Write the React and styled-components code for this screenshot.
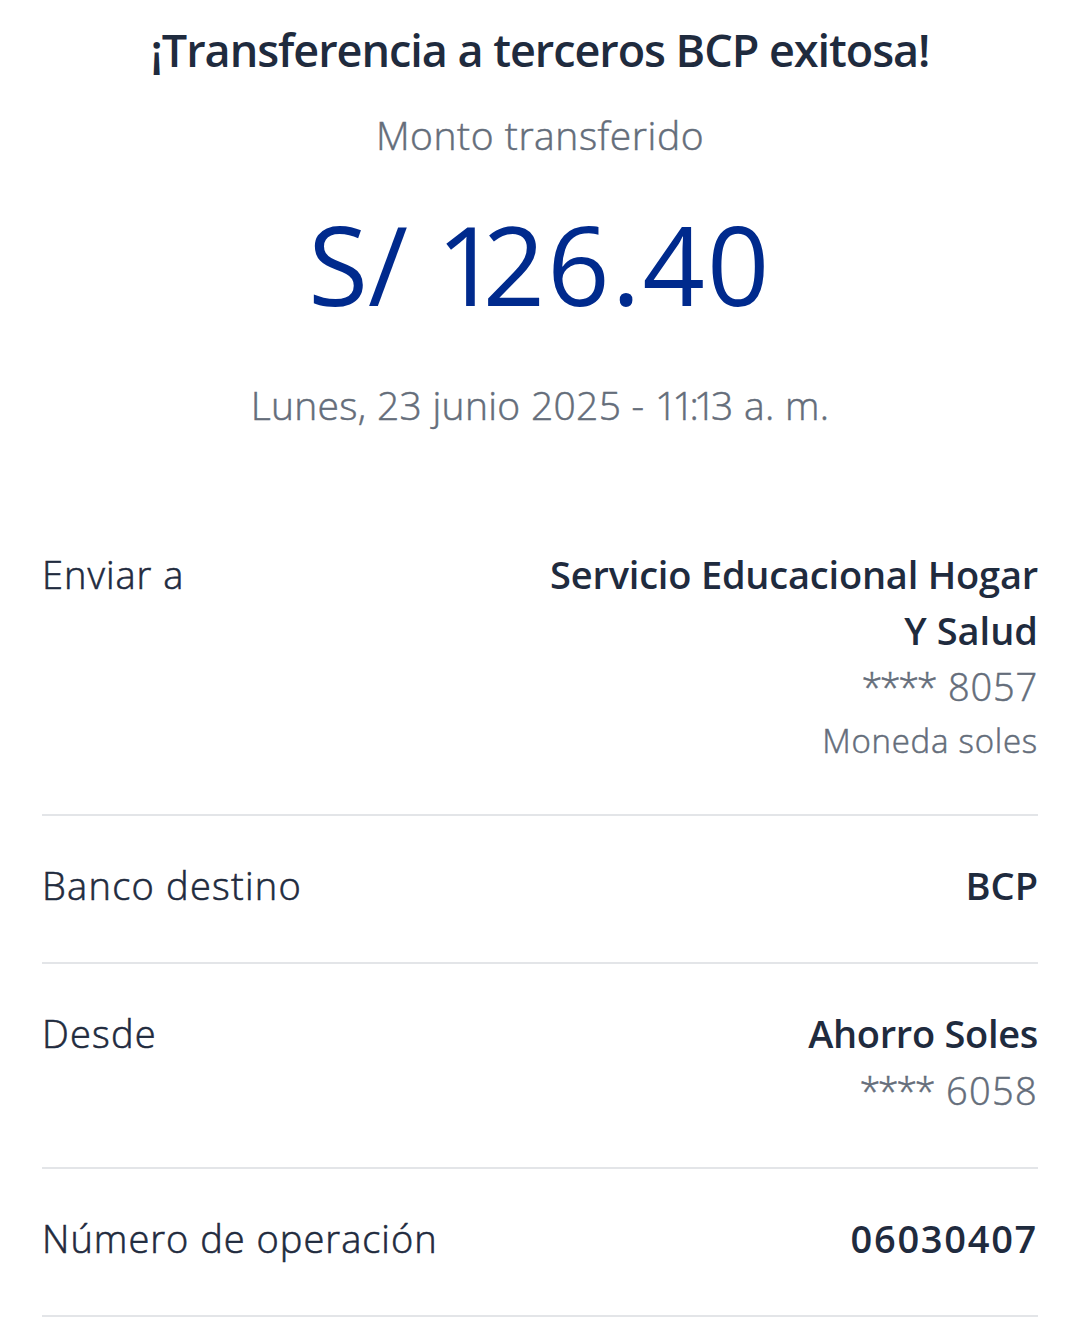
import React from 'react';
import styled, { createGlobalStyle } from 'styled-components';

const colors = {
  ink: '#1f2b3e',
  muted: '#646d7a',
  brand: '#002a8d',
  line: '#e3e5e8',
};

const GlobalStyle = createGlobalStyle`
  * {
    box-sizing: border-box;
  }
  body {
    margin: 0;
    background: #ffffff;
    font-family: 'Open Sans', 'Noto Sans', sans-serif;
  }
`;

const Receipt = styled.main`
  width: 1080px;
  height: 1342px;
  overflow: hidden;
  padding: 15px 42px 0;
  color: ${colors.ink};
`;

const Summary = styled.header`
  display: flex;
  flex-direction: column;
  align-items: center;
  height: 490px;
`;

const Text = styled.span`
  display: block;
  white-space: pre;
  font-size: ${props => props.$size || 38}px;
  line-height: ${props => props.$line || 56}px;
  letter-spacing: ${props => props.$spacing || 0}px;
`;

const Title = styled(Text).attrs({ as: 'h1' })`
  margin: 0;
  font-weight: 600;
`;

const Caption = styled(Text)`
  margin-top: ${props => props.$top || 0}px;
  color: ${colors.muted};
  font-weight: 300;
  -webkit-text-stroke: 0.5px ${colors.muted};
`;

const Amount = styled(Text)`
  margin-top: 39px;
  color: ${colors.brand};
  font-weight: 400;
`;

const Kern = styled.span`
  letter-spacing: ${props => props.$by}px;
`;

const Row = styled.section`
  display: flex;
  justify-content: space-between;
  height: ${props => props.$height}px;
  padding-top: 41px;
  border-bottom: 2px solid ${colors.line};
`;

const Label = styled(Text)`
  font-weight: 300;
  -webkit-text-stroke: 0.6px ${colors.ink};
`;

const Details = styled.div`
  display: flex;
  flex-direction: column;
  align-items: flex-end;
`;

const Value = styled(Text)`
  font-weight: 600;
`;

const AccountNumber = ({ digits, spacing, line }) => (
  <Caption $line={line}>
    <Kern $by={-2.5}>****</Kern>
    <Kern $by={3}> </Kern>
    <Kern $by={spacing}>{digits}</Kern>
  </Caption>
);

export default function App() {
  return (
    <Receipt>
      <GlobalStyle />
      <Summary>
        <Title $size={45} $line={70} $spacing={-1.05}>¡Transferencia a terceros BCP exitosa!</Title>
        <Caption $top={20} $size={39} $line={60} $spacing={0.55}>Monto transferido</Caption>
        <Amount $size={109} $line={120}>
          S/ <Kern $by={-16}>1</Kern><Kern $by={2.2}>26.40</Kern>
        </Amount>
        <Caption $top={51} $size={39} $line={60} $spacing={0.3}>
          Lunes, 23 junio 2025 - <Kern $by={-5}>11:1</Kern>3 a. m.
        </Caption>
      </Summary>
      <Row $height={311}>
        <Label $spacing={1}>Enviar a</Label>
        <Details>
          <Value $spacing={-0.2}>Servicio Educacional Hogar</Value>
          <Value>Y Salud</Value>
          <AccountNumber digits="8057" spacing={0.8} />
          <Caption $size={33} $line={54} $spacing={0.75}>Moneda soles</Caption>
        </Details>
      </Row>
      <Row $height={148}>
        <Label $spacing={1.25}>Banco destino</Label>
        <Value>BCP</Value>
      </Row>
      <Row $height={205}>
        <Label $spacing={1.2}>Desde</Label>
        <Details>
          <Value $spacing={-0.3}>Ahorro Soles</Value>
          <AccountNumber digits="6058" spacing={1.3} line={58} />
        </Details>
      </Row>
      <Row $height={148}>
        <Label $spacing={1}>Número de operación</Label>
        <Value $spacing={1.7}>06030407</Value>
      </Row>
    </Receipt>
  );
}
